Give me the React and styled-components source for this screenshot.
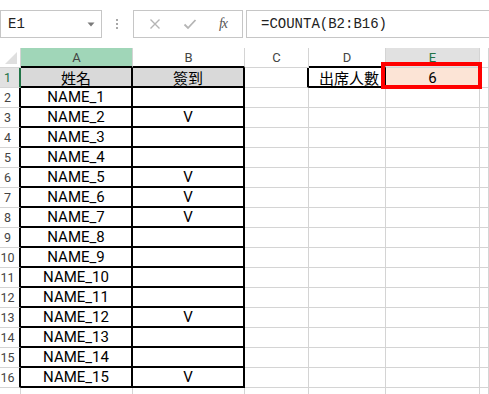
import React from 'react';
import styled, { createGlobalStyle } from 'styled-components';

const GlobalStyle = createGlobalStyle`
  html, body {
    margin: 0;
    padding: 0;
    background: #ffffff;
    overflow: hidden;
  }
  body {
    font-family: Roboto, "Noto Sans CJK TC", sans-serif;
  }
`;

const GRID = '#d4d4d4';
const BLACK = '#000000';
const GREEN = '#217346';

const Page = styled.div`
  width: 489px;
  height: 394px;
  overflow: hidden;
  background: #fff;
`;

const Toolbar = styled.div`
  display: flex;
  align-items: stretch;
  height: 28px;
  margin-top: 10px;
`;

const NameBox = styled.div`
  box-sizing: border-box;
  width: 102px;
  border: 1px solid #c6c6c6;
  display: flex;
  align-items: center;
  justify-content: space-between;
  padding: 0 6px 0 7px;
  font-family: "Liberation Mono", "DejaVu Sans Mono", monospace;
  font-size: 14px;
  color: #222;
`;

const Dots = styled.div`
  width: 30px;
  display: flex;
  flex-direction: column;
  align-items: center;
  justify-content: center;
  gap: 2px;
  padding-right: 1px;
`;

const Dot = styled.span`
  width: 2px;
  height: 2px;
  background: #a8a8a8;
`;

const FxButtons = styled.div`
  box-sizing: border-box;
  width: 110px;
  border: 1px solid #c6c6c6;
  display: flex;
  align-items: center;
  justify-content: space-around;
  padding: 0 4px;
`;

const FxLabel = styled.span`
  font-family: "Liberation Serif", "DejaVu Serif", serif;
  font-style: italic;
  font-size: 14px;
  color: #555;
  letter-spacing: -1px;
`;

const FormulaInput = styled.div`
  box-sizing: border-box;
  flex: 1;
  margin-left: 3px;
  margin-right: -4px;
  border: 1px solid #c6c6c6;
  display: flex;
  align-items: center;
  padding-left: 14px;
  font-family: "Liberation Mono", "DejaVu Sans Mono", monospace;
  font-size: 14px;
  color: #222;
`;

const Sheet = styled.div`
  display: grid;
  grid-template-columns: 21px 112px 112px 64px 77px 94px 1fr;
  grid-auto-rows: 20px;
  margin-top: 10px;
`;

const Cell = styled.div`
  box-sizing: border-box;
  position: relative;
  display: flex;
  align-items: center;
  justify-content: ${p => p.$align || 'center'};
  padding: ${p => (p.$align === 'flex-end' ? '0 5px 0 0' : '0')};
  background: ${p => p.$bg || '#fff'};
  border-right: ${p => p.$rw || 1}px solid ${p => p.$right || GRID};
  border-bottom: ${p => p.$bw || 1}px solid ${p => p.$bottom || GRID};
  font-size: 15px;
  color: #000;
  white-space: nowrap;
`;

const HeadCell = styled(Cell)`
  font-size: 13px;
  color: ${p => p.$color || '#444'};
`;

const Corner = styled(Cell)`
  &::after {
    content: '';
    position: absolute;
    right: 3px;
    bottom: 3px;
    width: 0;
    height: 0;
    border-left: 12px solid transparent;
    border-bottom: 12px solid #dfdfdf;
  }
`;

const RowNum = styled(Cell)`
  justify-content: center;
  padding-right: 4px;
  font-size: 12.5px;
  color: ${p => p.$color || '#444'};
`;

const CjkText = styled.span`
  font-family: "Noto Sans CJK TC", "Noto Sans CJK SC", sans-serif;
  font-size: 15px;
`;

const Highlight = styled.div`
  position: absolute;
  left: -5px;
  right: -3px;
  top: -6px;
  bottom: -2px;
  border: 4px solid #ff0000;
  z-index: 2;
`;

const Caret = () => (
  <svg width="8" height="5" viewBox="0 0 8 5">
    <path d="M0.5 0.5 L7.5 0.5 L4 4.5 Z" fill="#7a7a7a" />
  </svg>
);

const CancelIcon = () => (
  <svg width="12" height="12" viewBox="0 0 12 12">
    <path d="M1.5 1.5 L10.5 10.5 M10.5 1.5 L1.5 10.5" stroke="#b5b5b5" strokeWidth="1.4" fill="none" />
  </svg>
);

const CheckIcon = () => (
  <svg width="14" height="12" viewBox="0 0 14 12">
    <path d="M1.5 6.5 L5 10 L12.5 2" stroke="#b5b5b5" strokeWidth="1.8" fill="none" />
  </svg>
);

const names = Array.from({ length: 15 }, (_, i) => `NAME_${i + 1}`);
const signed = [2, 5, 6, 7, 12, 15];

// A1:B16 and D1 carry a black border
const boxed = (r, c) => (r >= 1 && r <= 16 && (c === 1 || c === 2)) || (r === 1 && c === 4);

const edges = (r, c) => {
  const right = boxed(r, c) || boxed(r, c + 1);
  const bottom = boxed(r, c) || boxed(r + 1, c);
  return {
    $right: right ? BLACK : GRID,
    $rw: right ? 2 : 1,
    $bottom: bottom ? BLACK : GRID,
    $bw: bottom ? 2 : 1,
  };
};

const cellValue = (r, c) => {
  if (r === 1) {
    if (c === 1) return <CjkText>姓名</CjkText>;
    if (c === 2) return <CjkText>簽到</CjkText>;
    if (c === 4) return <CjkText>出席人數</CjkText>;
    if (c === 5) return '6';
    return null;
  }
  if (r > 16) return null;
  if (c === 1) return names[r - 2];
  if (c === 2 && signed.includes(r - 1)) return 'V';
  return null;
};

const letters = ['A', 'B', 'C', 'D', 'E', ''];

export default function App() {
  const rows = [];

  rows.push(<Corner key="corner" />);
  letters.forEach((l, i) => {
    const c = i + 1;
    const e = edges(0, c);
    let bg = '#fff';
    let color = '#444';
    if (c === 1) bg = '#a0d6b8';
    if (c === 5) {
      bg = '#e1e1e1';
      color = GREEN;
    }
    rows.push(
      <HeadCell key={`h${c}`} {...e} $bg={bg} $color={color}>
        {l}
      </HeadCell>
    );
  });

  for (let r = 1; r <= 17; r++) {
    const first = r === 1;
    rows.push(
      <RowNum
        key={`n${r}`}
        $bg={first ? '#e1e1e1' : '#fff'}
        $color={first ? GREEN : '#444'}
        $right={first ? GREEN : boxed(r, 1) ? BLACK : GRID}
        $rw={first || boxed(r, 1) ? 2 : 1}
      >
        {r <= 16 ? r : null}
      </RowNum>
    );
    for (let c = 1; c <= 6; c++) {
      const e = edges(r, c);
      const isE1 = r === 1 && c === 5;
      rows.push(
        <Cell
          key={`c${r}-${c}`}
          {...e}
          $bg={(r === 1 && (c === 1 || c === 2)) ? '#d9d9d9' : isE1 ? '#fce4d6' : '#fff'}
          $align={r === 1 && c === 4 ? 'flex-end' : 'center'}
        >
          {cellValue(r, c)}
          {isE1 && <Highlight />}
        </Cell>
      );
    }
  }

  return (
    <Page>
      <GlobalStyle />
      <Toolbar>
        <NameBox>
          <span>E1</span>
          <Caret />
        </NameBox>
        <Dots>
          <Dot />
          <Dot />
          <Dot />
        </Dots>
        <FxButtons>
          <CancelIcon />
          <CheckIcon />
          <FxLabel>fx</FxLabel>
        </FxButtons>
        <FormulaInput>=COUNTA(B2:B16)</FormulaInput>
      </Toolbar>
      <Sheet>{rows}</Sheet>
    </Page>
  );
}
